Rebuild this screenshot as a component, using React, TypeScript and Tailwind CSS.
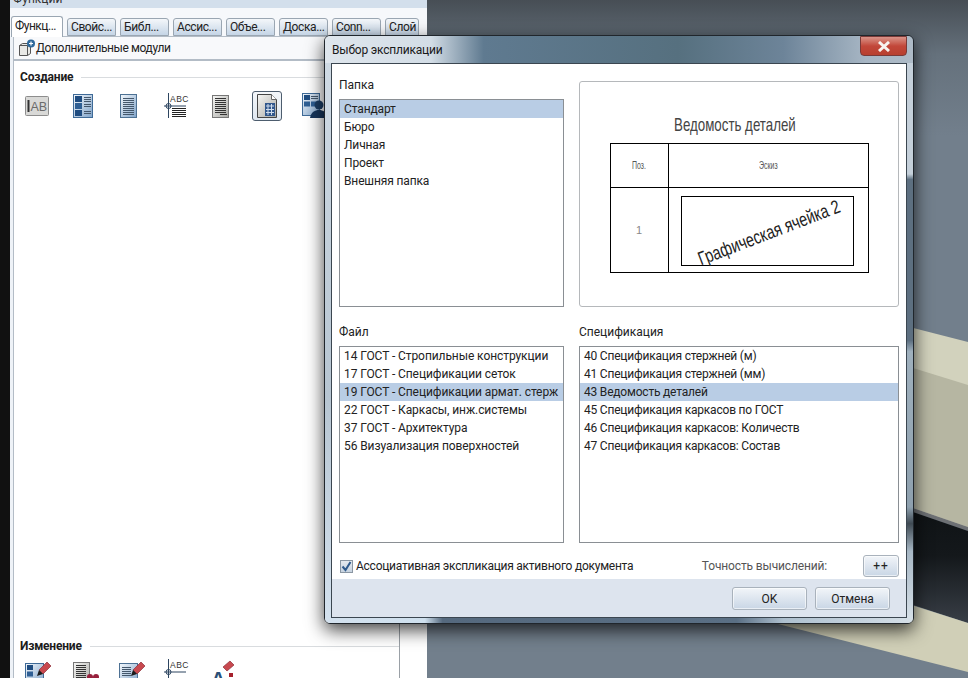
/*
 * Allplan-like window: side palette on the left, 3D view behind,
 * and the modal "Выбор экспликации" dialog on top.
 */
import type { ReactNode } from "react";

const TABS = ["Свойс...", "Библ...", "Ассис...", "Объе...", "Доска...", "Conn...", "Слой"];
const TAB_WIDTHS = ["w-[49px]", "w-[49px]", "w-[49px]", "w-[49px]", "w-[49px]", "w-[49px]", "w-[34px]"];

function Sheet({ children }: { children: ReactNode }) {
  return (
    <svg width="28" height="28" viewBox="0 0 28 28">
      <defs>
        <linearGradient id="blue" x1="0" y1="0" x2="1" y2="1">
          <stop offset="0" stopColor="#f4f8fc" />
          <stop offset="1" stopColor="#7fa3c9" />
        </linearGradient>
        <linearGradient id="grey" x1="0" y1="0" x2="1" y2="1">
          <stop offset="0" stopColor="#f7f7f5" />
          <stop offset="1" stopColor="#a9a9a5" />
        </linearGradient>
      </defs>
      {children}
    </svg>
  );
}

function Lines({ x, y, w, n, gap = 2, color = "#44576b" }: { x: number; y: number; w: number; n: number; gap?: number; color?: string }) {
  return (
    <>
      {Array.from({ length: n }).map((_, i) => (
        <rect key={i} x={x} y={y + i * gap} width={w} height="1" fill={color} />
      ))}
    </>
  );
}

function IconAB() {
  return (
    <Sheet>
      <rect x="1.500" y="4.500" width="23" height="19" rx="1" fill="#d9d9d7" stroke="#8d8d8d" />
      <rect x="3.500" y="8" width="2" height="12" fill="#333" />
      <text x="6.500" y="18.500" fontSize="12.500" fill="#6b6b6b" fontFamily="Liberation Sans, sans-serif">AB</text>
    </Sheet>
  );
}

function IconTableBlue() {
  return (
    <Sheet>
      <rect x="1.500" y="2.500" width="19" height="23" fill="url(#blue)" stroke="#3e6a97" />
      <rect x="3" y="4" width="7" height="6" fill="#1f4c80" />
      <rect x="3" y="11" width="7" height="6" fill="#2f5f94" />
      <rect x="3" y="18" width="7" height="6" fill="#1f4c80" />
      <Lines x={12} y={5} w={7} n={3} gap={2} />
      <Lines x={12} y={12} w={7} n={2} gap={2} />
      <Lines x={12} y={19} w={7} n={2} gap={2} />
    </Sheet>
  );
}

function IconListBlue() {
  return (
    <Sheet>
      <rect x="1.500" y="2.500" width="16" height="23" fill="url(#blue)" stroke="#4d7194" />
      <Lines x={4} y={6} w={11} n={9} />
    </Sheet>
  );
}

function IconAxis({ clipped }: { clipped?: boolean }) {
  return (
    <Sheet>
      <text x="6" y="10" fontSize="8.500" letterSpacing="0.5" fill="#333" fontFamily="Liberation Sans, sans-serif">ABC</text>
      <rect x="4" y="1" width="1" height="25" fill="#2d4560" />
      <circle cx="4.500" cy="14" r="2.500" fill="none" stroke="#2d4560" />
      <rect x="0" y="13.500" width="22" height="1" fill="#2d4560" />
      {!clipped && <Lines x={8} y={16} w={14} n={5} color="#222" />}
    </Sheet>
  );
}

function IconDoc() {
  return (
    <Sheet>
      <rect x="4.500" y="3.500" width="16" height="22" fill="url(#grey)" stroke="#777" />
      <Lines x={7} y={6} w={11} n={8} color="#333" />
      <rect x="12" y="22" width="7" height="1" fill="#333" />
    </Sheet>
  );
}

function IconDocTable() {
  return (
    <Sheet>
      <path d="M4.500 2.500h14l5 5v18h-19z" fill="url(#grey)" stroke="#444" />
      <path d="M18.500 2.500v5h5" fill="#fff" stroke="#666" />
      <rect x="12" y="11" width="10" height="13" fill="#31578c" />
      <path d="M15 12v11M18.500 12v11M13 14h8M13 17.500h8M13 20.500h8" stroke="#cfdcec" strokeWidth="1" fill="none" />
    </Sheet>
  );
}

function IconTablePerson() {
  return (
    <Sheet>
      <rect x="1.500" y="1.500" width="17" height="22" fill="url(#blue)" stroke="#3e6a97" />
      <rect x="3" y="3" width="6" height="5" fill="#1f4c80" />
      <rect x="3" y="9.500" width="6" height="5" fill="#2f5f94" />
      <rect x="10" y="9.500" width="6" height="5" fill="#2f5f94" />
      <Lines x={10} y={4} w={7} n={2} />
      <circle cx="18" cy="13" r="4.500" fill="#1d3f66" />
      <path d="M9 26c1-6 5-8 9-8s8 2 9 8z" fill="#17365c" />
    </Sheet>
  );
}

function Pencil() {
  return (
    <>
      <path d="M15 12L23 4l4 4-8 8z" fill="#c8494f" stroke="#8d2f3a" strokeWidth="0.7" />
      <path d="M15 12l4 4-6 2z" fill="#1b1b1b" />
    </>
  );
}

function IconEditTable() {
  return (
    <Sheet>
      <rect x="1.500" y="5.500" width="18" height="21" fill="url(#blue)" stroke="#3e6a97" />
      <rect x="3" y="7" width="6" height="5" fill="#1f4c80" />
      <rect x="3" y="13.500" width="6" height="5" fill="#2f5f94" />
      <Pencil />
    </Sheet>
  );
}

function IconEditDoc() {
  return (
    <Sheet>
      <rect x="1.500" y="4.500" width="16" height="22" fill="url(#grey)" stroke="#777" />
      <Lines x={4} y={7} w={10} n={8} color="#333" />
      <circle cx="18" cy="19" r="3" fill="#97203c" />
      <circle cx="24" cy="19" r="3" fill="#97203c" />
    </Sheet>
  );
}

function IconEditList() {
  return (
    <Sheet>
      <rect x="1.500" y="5.500" width="18" height="21" fill="url(#blue)" stroke="#4d7194" />
      <Lines x={4} y={9} w={9} n={5} />
      <Pencil />
    </Sheet>
  );
}

function IconEditA() {
  return (
    <Sheet>
      <text x="1" y="28" fontSize="20" fontWeight="700" fill="#2b5078" fontFamily="Liberation Sans, sans-serif">A</text>
      <path d="M13 9L20 3l4 4-7 6z" fill="#c8494f" stroke="#8d2f3a" strokeWidth="0.7" />
      <rect x="19" y="15" width="4" height="4" fill="#a5202c" />
      <rect x="19" y="22" width="4" height="4" fill="#e0a72a" />
    </Sheet>
  );
}

function ModuleIcon() {
  return (
    <svg width="18" height="18" viewBox="0 0 18 18">
      <path d="M1.500 6.500l3-2h8v10l-3 2h-8z" fill="#e9e9e6" stroke="#555" />
      <path d="M1.500 6.500h8v10M9.500 6.500l3-2" fill="none" stroke="#555" />
      <circle cx="13" cy="4.500" r="4" fill="#2f6a9c" />
      <path d="M13 2.500v4M11 4.500h4" stroke="#fff" strokeWidth="1.200" />
    </svg>
  );
}

function SectionTitle({ children }: { children: ReactNode }) {
  return (
    <div className="flex items-center gap-[8px] h-[16px]">
      <span className="text-[12px] font-bold tracking-[-0.2px] text-[#1c1c1c] whitespace-nowrap">{children}</span>
      <div className="h-px flex-1 bg-[#d9dcdf]" />
    </div>
  );
}

function ListBox({ items, selected, className }: { items: string[]; selected: number; className: string }) {
  return (
    <div className={`border border-[#8a8f94] bg-white overflow-hidden text-[12px] ${className}`}>
      {items.map((item, i) => (
        <div
          key={item}
          className={`h-[18px] leading-[18px] px-[4px] text-[#222] whitespace-nowrap overflow-hidden ${i === selected ? "bg-[#b9cde5]" : ""}`}
        >
          {item}
        </div>
      ))}
    </div>
  );
}

function FieldLabel({ children }: { children: ReactNode }) {
  return <div className="h-[16px] leading-[15px] text-[12px] text-[#222] mb-[5px]">{children}</div>;
}

function DialogButton({ children, className }: { children: ReactNode; className: string }) {
  return (
    <button className={`rounded-[3px] border border-[#a9b2bc] bg-gradient-to-b from-[#f2f5f9] to-[#c9d6e5] text-[12px] text-[#222] shadow-[inset_0_0_0_1px_rgba(255,255,255,0.6)] ${className}`}>
      {children}
    </button>
  );
}

function Preview() {
  return (
    <div className="h-[226px] rounded-[3px] border border-[#b5b8bb] bg-white flex flex-col items-center pt-[33px] font-['Liberation_Sans',_sans-serif]">
      <div className="h-[20px] leading-[20px] text-[19px] text-[#444] scale-x-[0.7] -translate-x-[4px] whitespace-nowrap">
        Ведомость деталей
      </div>
      <div className="mt-[8px] w-[259px] h-[130px] border-[1.5px] border-black grid grid-cols-[58px_minmax(0,1fr)] grid-rows-[44px_minmax(0,1fr)] text-[#555]">
        <div className="border-r-[1.5px] border-b-[1.5px] border-black flex items-center justify-center text-[10px]">
          <span className="scale-x-[0.7]">Поз.</span>
        </div>
        <div className="border-b-[1.5px] border-black flex items-center justify-center text-[10px]">
          <span className="scale-x-[0.7]">Эскиз</span>
        </div>
        <div className="border-r-[1.5px] border-black flex items-center justify-center text-[11px] text-[#888]">1</div>
        <div className="min-w-0 pt-[8px] pr-[14px] pb-[6px] pl-[12px] flex">
          <div className="flex-1 min-w-0 border-[1.5px] border-black flex items-center justify-center">
            <span className="shrink-0 -rotate-[21deg] scale-x-[0.76] text-[19px] text-[#222] whitespace-nowrap translate-x-[2px] translate-y-[1px] leading-none">
              Графическая ячейка 2
            </span>
          </div>
        </div>
      </div>
    </div>
  );
}

function Dialog() {
  return (
    <div className="absolute left-[324px] top-[35px] w-[590px] h-[589px] rounded-[6px] border border-[#20262c] shadow-[0_6px_18px_rgba(0,0,0,0.75)] flex flex-col overflow-hidden">
      {/* title bar: light on the left, dark in the middle */}
      <div className="h-[27px] flex justify-between bg-[linear-gradient(to_right,#dfe6ed_0%,#d3dde6_18%,#5f7a90_27%,#56707f_60%,#6d8499_78%,#a7b6c4_92%,#aebbc7_100%)]">
        <span className="pl-[7px] pt-[6px] text-[12px] leading-[17px] tracking-[-0.2px] text-[#1a1a1a]">Выбор экспликации</span>
        <div className="mr-[6px] w-[47px] h-[20px] rounded-b-[4px] border border-[#7a3a38] bg-gradient-to-b from-[#d99389] via-[#c2473a] to-[#b8402f] flex items-center justify-center">
          <svg width="14" height="11" viewBox="0 0 14 11">
            <path d="M2 1l10 9M12 1L2 10" stroke="#f7f3ef" strokeWidth="3" />
          </svg>
        </div>
      </div>

      <div className="flex-1 flex min-h-0">
        <div className="w-[6px] bg-[linear-gradient(to_bottom,#cfdae4_0%,#b7c5d1_60%,#d3e1ee_100%)]" />
        <div className="flex-1 flex flex-col bg-white border border-[#3b4650]">
          <div className="flex-1 flex flex-col px-[7px] pt-[14px]">
            <div className="grid grid-cols-[225px_320px] gap-x-[15px] items-end">
              <div>
                <FieldLabel>Папка</FieldLabel>
                <ListBox className="h-[208px] tracking-[-0.13px]" selected={0} items={["Стандарт", "Бюро", "Личная", "Проект", "Внешняя папка"]} />
              </div>
              <Preview />
            </div>

            <div className="grid grid-cols-[225px_320px] gap-x-[15px] mt-[18px]">
              <div>
                <FieldLabel>Файл</FieldLabel>
                <ListBox
                  className="h-[197px] tracking-[-0.08px]"
                  selected={2}
                  items={[
                    "14 ГОСТ - Стропильные конструкции",
                    "17 ГОСТ - Спецификации сеток",
                    "19 ГОСТ - Спецификации армат. стерж",
                    "22 ГОСТ - Каркасы, инж.системы",
                    "37 ГОСТ - Архитектура",
                    "56 Визуализация поверхностей",
                  ]}
                />
              </div>
              <div>
                <FieldLabel>Спецификация</FieldLabel>
                <ListBox
                  className="h-[197px] tracking-[-0.2px]"
                  selected={2}
                  items={[
                    "40 Спецификация стержней (м)",
                    "41 Спецификация стержней (мм)",
                    "43 Ведомость деталей",
                    "45 Спецификация каркасов по ГОСТ",
                    "46 Спецификация каркасов: Количеств",
                    "47 Спецификация каркасов: Состав",
                  ]}
                />
              </div>
            </div>

            <div className="flex items-center h-[22px] mt-[12px]">
              <div className="w-[13px] h-[13px] ml-[1px] border border-[#8b97a3] bg-gradient-to-b from-[#e4e9ee] to-[#c7d3e0] flex items-center justify-center">
                <svg width="11" height="11" viewBox="0 0 11 11">
                  <path d="M1.500 5.500l3 3.500 5-8" fill="none" stroke="#2f5a8c" strokeWidth="2" />
                </svg>
              </div>
              <span className="ml-[3px] text-[12px] tracking-[-0.25px] text-[#222] whitespace-nowrap">Ассоциативная экспликация активного документа</span>
              <span className="ml-auto mr-[36px] text-[12px] tracking-[-0.15px] text-[#555] whitespace-nowrap">Точность вычислений:</span>
              <DialogButton className="w-[36px] h-[22px] tracking-[1px]">++</DialogButton>
            </div>
          </div>

          <div className="h-[38px] bg-[#dde4ee] flex justify-end items-start pt-[8px] pr-[16px] gap-[8px]">
            <DialogButton className="w-[75px] h-[23px]">OK</DialogButton>
            <DialogButton className="w-[75px] h-[23px]">Отмена</DialogButton>
          </div>
        </div>
        <div className="w-[6px] bg-[linear-gradient(to_bottom,#c5d0da_0%,#c5d0da_20%,#5d6f80_21%,#5d6f80_50%,#9fb0bd_52%,#8ea0ae_80%,#3f4a53_83%,#a7b7c4_88%,#d5dfe7_100%)]" />
      </div>
      <div className="h-[5px] bg-[linear-gradient(to_right,#d3e1ee_0%,#cfe0ee_17%,#55697e_20%,#5a6f84_70%,#aec0cf_78%,#d5dfe7_100%)]" />
    </div>
  );
}

function Palette() {
  return (
    <div className="w-[417px] h-full flex flex-col bg-[#eef2f7]">
      <div className="h-[8px] overflow-hidden bg-[#d3dfec] relative">
        <span className="absolute left-[3px] -top-[9px] text-[12px] text-[#333] leading-[16px]">Функции</span>
      </div>
      <div className="h-[28px] flex items-end gap-[4px] pl-px bg-[#f6f8fb]">
        <div className="w-[52px] h-[21px] -mb-px relative rounded-t-[3px] border border-[#9aa6b2] border-b-0 bg-white text-[12px] tracking-[-0.5px] text-[#222] leading-[19px] pl-[3px]">
          Функц...
        </div>
        {TABS.map((t, i) => (
          <div
            key={t}
            className={`${TAB_WIDTHS[i]} h-[18px] rounded-t-[3px] border border-[#9aa6b2] bg-gradient-to-b from-[#f4f7fa] to-[#c5d5e6] text-[12px] tracking-[-0.4px] text-[#222] leading-[16px] pl-[3px] whitespace-nowrap overflow-hidden`}
          >
            {t}
          </div>
        ))}
      </div>
      <div className="h-[24px] ml-[3px] flex items-center pl-[4px] border border-[#b3bcc6] border-r-0 bg-[#f8f9fb] text-[12px] tracking-[-0.4px] text-[#222]">
        <ModuleIcon />
        Дополнительные модули
      </div>
      <div className="flex-1 ml-[3px] flex border-l border-[#b3bcc6] border-t bg-white">
        <div className="w-[386px] border-r border-[#9aa0a6] flex flex-col justify-between pl-[6px] pt-[8px]">
          <div>
            <SectionTitle>Создание</SectionTitle>
            <div className="flex items-center h-[32px] mt-[5px] pl-[4px]">
              <div className="w-[48px]"><IconAB /></div>
              <div className="w-[47px]"><IconTableBlue /></div>
              <div className="w-[45px]"><IconListBlue /></div>
              <div className="w-[44px]"><IconAxis /></div>
              <div className="w-[44px]"><IconDoc /></div>
              <div className="w-[30px] h-[30px] rounded-[3px] border border-[#4d5d6e] bg-gradient-to-b from-[#f4f7fa] to-[#dfe7f0] flex items-center justify-center"><IconDocTable /></div>
              <div className="ml-[19px] w-[28px]"><IconTablePerson /></div>
            </div>
          </div>
          <div className="h-[40px] overflow-hidden">
            <SectionTitle>Изменение</SectionTitle>
            <div className="flex mt-[4px] pl-[4px]">
              <div className="w-[48px]"><IconEditTable /></div>
              <div className="w-[46px]"><IconEditDoc /></div>
              <div className="w-[46px]"><IconEditList /></div>
              <div className="w-[46px]"><IconAxis clipped /></div>
              <div className="w-[28px]"><IconEditA /></div>
            </div>
          </div>
        </div>
        <div className="flex-1 bg-white" />
      </div>
    </div>
  );
}

export default function App() {
  return (
    <div className="relative w-[968px] h-[678px] overflow-hidden flex bg-[#6f7c89] font-['Roboto',_sans-serif]">
      <div className="w-[10px] h-full bg-[#111]" />
      <Palette />
      {/* 3D model behind the dialog */}
      <svg className="flex-1 h-full" viewBox="427 0 541 678" preserveAspectRatio="none">
        <defs>
          <linearGradient id="sky" x1="0" y1="0" x2="0" y2="1">
            <stop offset="0" stopColor="#474e55" />
            <stop offset="0.08" stopColor="#65717c" />
            <stop offset="0.2" stopColor="#727f8c" />
            <stop offset="1" stopColor="#727f8c" />
          </linearGradient>
          <linearGradient id="pit" x1="0" y1="0" x2="0" y2="1">
            <stop offset="0" stopColor="#0b0f11" />
            <stop offset="0.55" stopColor="#14181b" />
            <stop offset="1" stopColor="#383e46" />
          </linearGradient>
        </defs>
        <rect x="427" y="0" width="541" height="678" fill="url(#sky)" />
        <polygon points="800,299 968,342 968,530 800,470" fill="#d2d2bd" />
        <polygon points="800,333 968,385 968,527 800,469" fill="#b6b6a2" />
        <polygon points="800,469 968,527 968,531 800,473" fill="#6d7074" />
        <polygon points="800,473 968,531 968,623 800,568" fill="url(#pit)" />
        <polygon points="770,560 968,623 968,672 774,623" fill="#d0cfb7" />
      </svg>
      <Dialog />
    </div>
  );
}
